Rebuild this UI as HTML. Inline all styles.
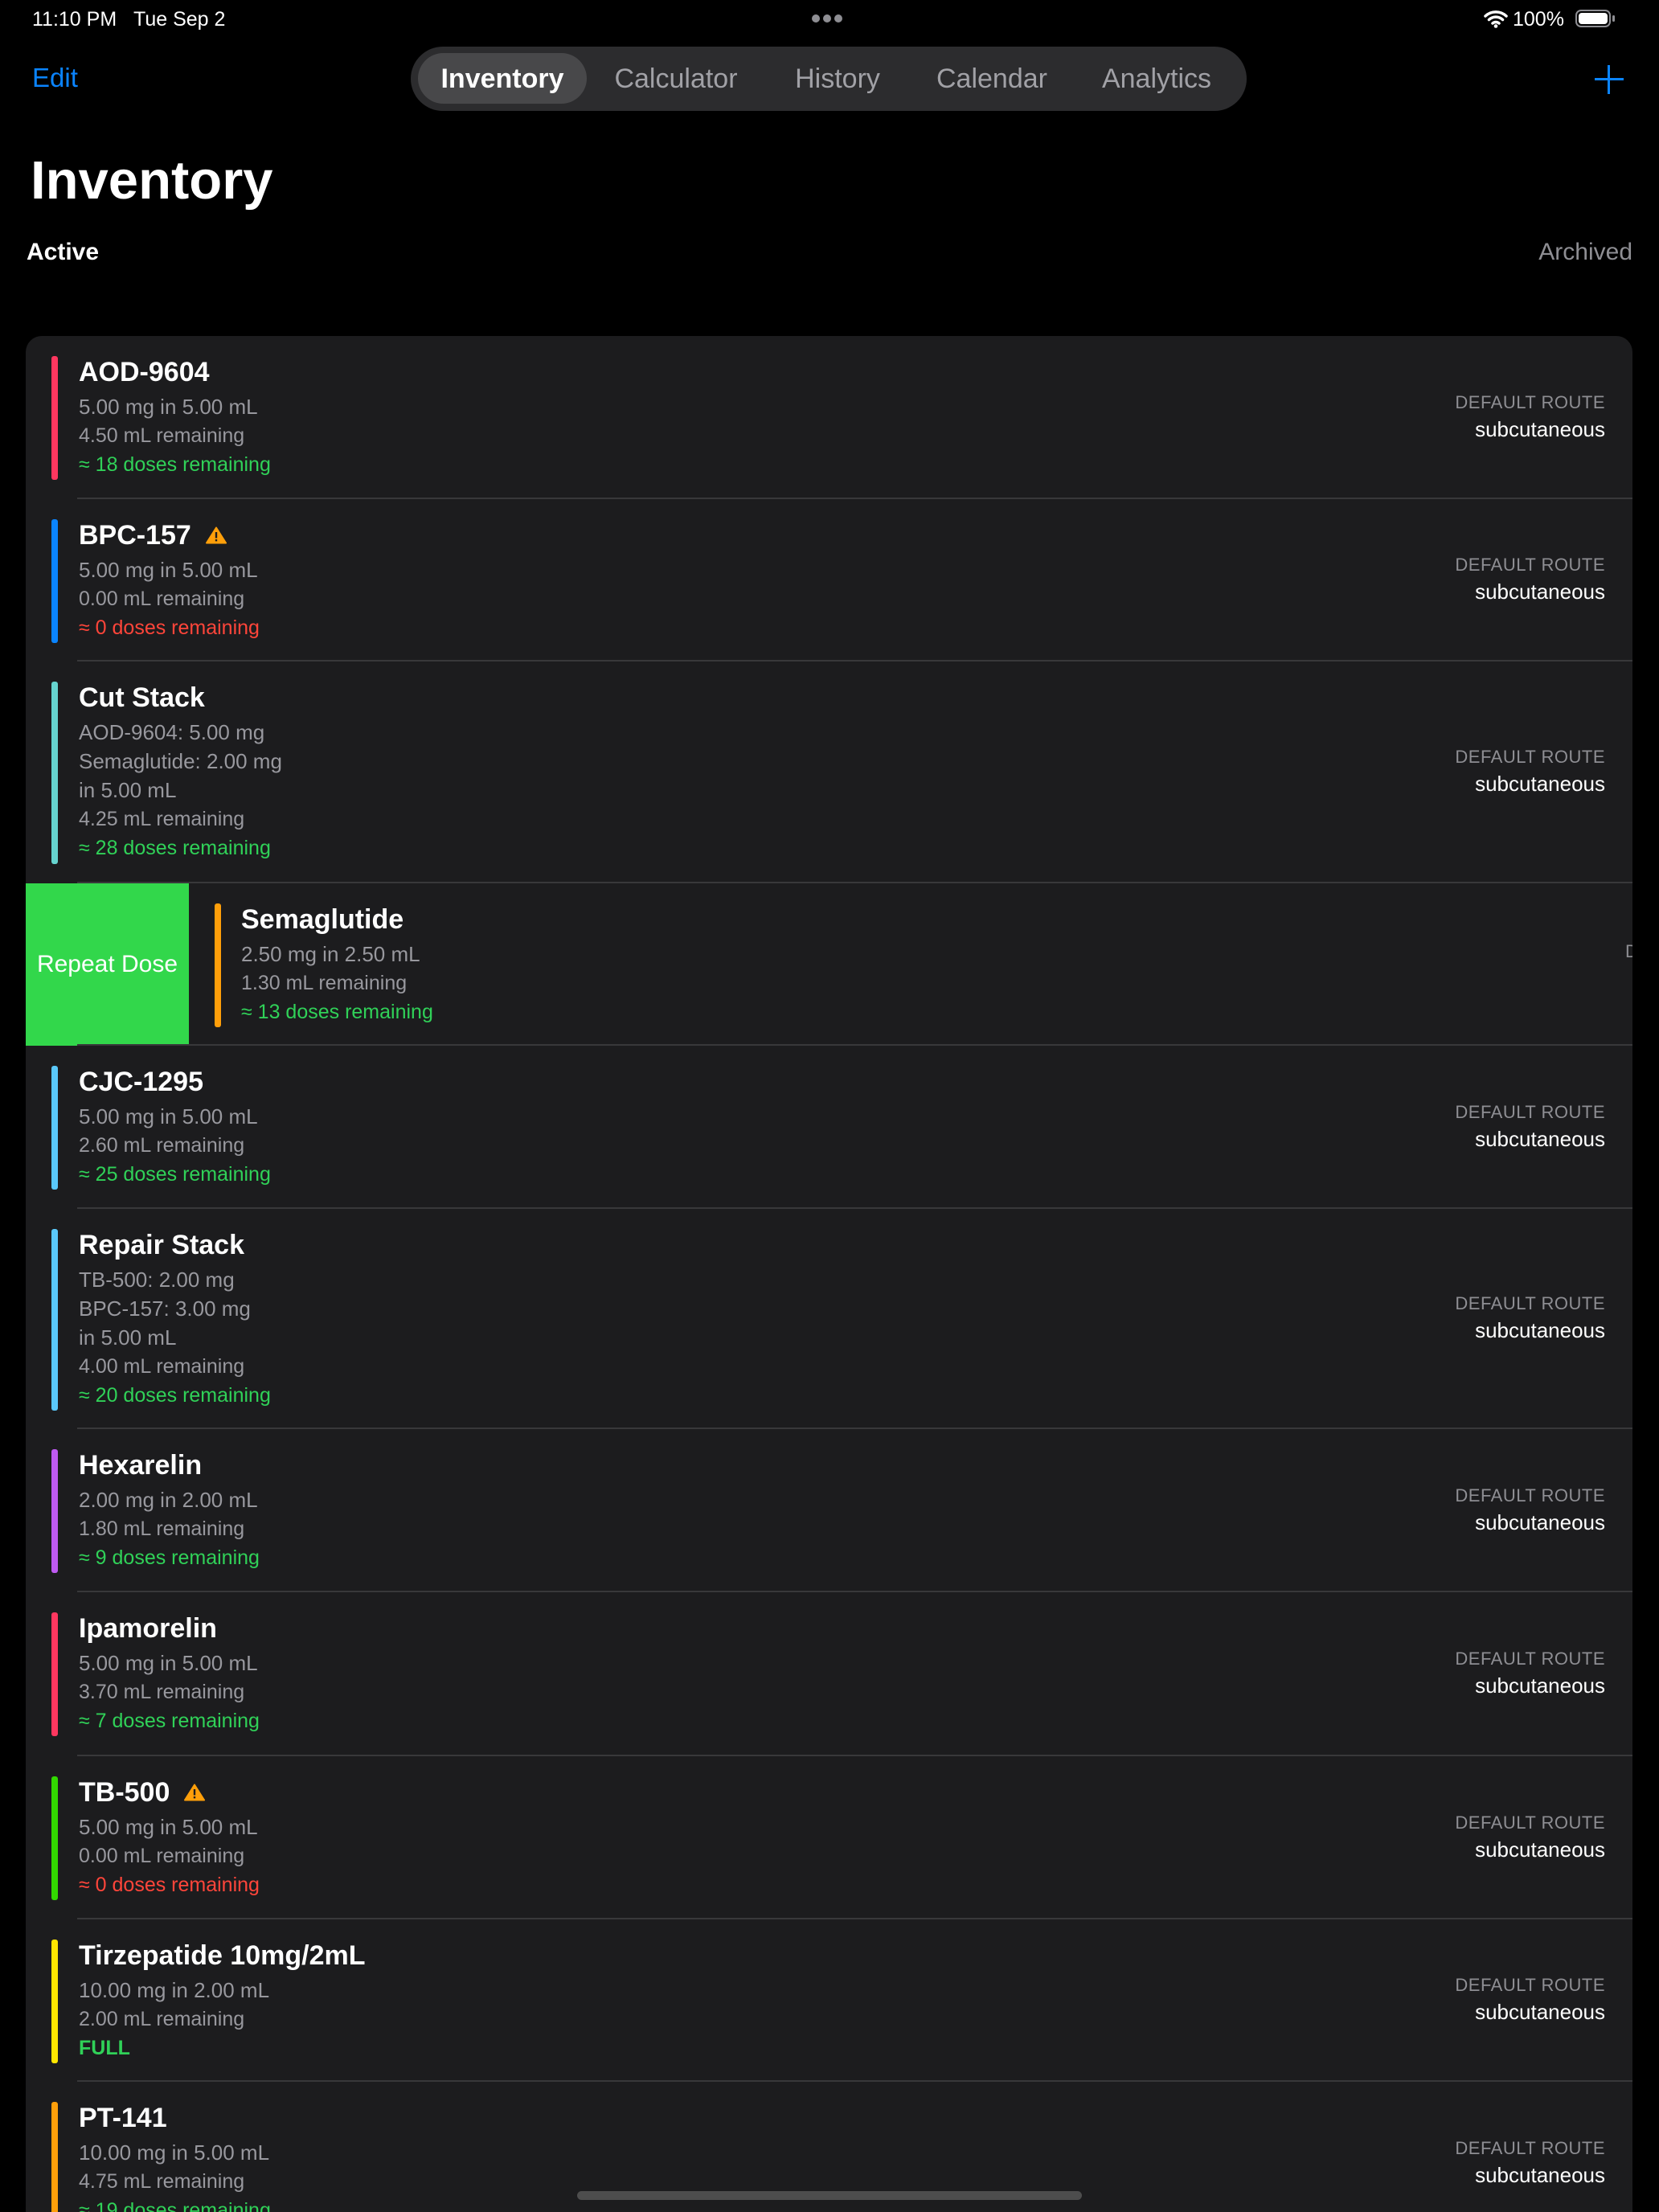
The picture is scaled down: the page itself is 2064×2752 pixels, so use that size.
<!DOCTYPE html>
<html><head><meta charset="utf-8"><style>
*{margin:0;padding:0;box-sizing:border-box}
html{width:2064px;height:2752px;overflow:hidden;background:#000}
body{width:2064px;height:2752px;background:#000;overflow:hidden;position:relative;font-family:"Liberation Sans",sans-serif;color:#fff}
.abs{position:absolute}
.card{position:absolute;left:32px;top:418px;width:1999px;height:2334px;background:#1c1c1e;border-radius:20px 20px 0 0;overflow:hidden}
.row{position:absolute;left:0;width:1999px}
.sep{position:absolute;left:64px;right:0;bottom:0;height:2px;background:#38383a}
.bar{position:absolute;left:32px;top:25px;width:8px;border-radius:3px}
.txt{position:absolute;left:66px;top:20px;white-space:nowrap}
.nm{font-size:34px;font-weight:600;height:50px;line-height:44px;display:flex;align-items:center}
.l{font-size:26px;line-height:36px;color:#98989e}
.s{font-size:25px}
.g{color:#30d158}.r{color:#ff453a}
.rt{position:absolute;right:34px;top:50%;transform:translateY(-50%);text-align:right;margin-top:-2px}
.rt .a{font-size:22px;color:#8e8e93;line-height:32px;letter-spacing:.5px}
.rt .b{font-size:26px;line-height:34px}
.warn{margin-left:18px;width:26px;height:22px}
</style></head><body>
<div class="abs" style="left:40px;top:8px;font-size:25px;line-height:32px">11:10 PM&nbsp;&nbsp;&nbsp;Tue Sep 2</div>
<div class="abs" style="left:1010px;top:18px;display:flex;gap:4px"><i style="width:10px;height:10px;border-radius:5px;background:#8e8e93"></i><i style="width:10px;height:10px;border-radius:5px;background:#8e8e93"></i><i style="width:10px;height:10px;border-radius:5px;background:#8e8e93"></i></div>
<svg class="abs" style="left:1846px;top:11px" width="30" height="24" viewBox="0 0 30 24"><path d="M2 9a19 19 0 0 1 26 0M6.5 13.5a12.5 12.5 0 0 1 17 0M11 18a6 6 0 0 1 8 0" stroke="#fff" stroke-width="3.5" fill="none" stroke-linecap="round"/><circle cx="15" cy="21.5" r="2.3" fill="#fff"/></svg>
<div class="abs" style="left:1882px;top:8px;font-size:25px;line-height:32px">100%</div>
<div class="abs" style="left:1960px;top:12px;width:44px;height:22px;border:2px solid #8e8e93;border-radius:7px;padding:2px"><div style="width:100%;height:100%;background:#fff;border-radius:4px"></div></div>
<div class="abs" style="left:2006px;top:19px;width:3px;height:8px;background:#8e8e93;border-radius:2px"></div>

<div class="abs" style="left:40px;top:76px;font-size:33px;color:#0a84ff;line-height:42px">Edit</div>
<div class="abs" style="left:511px;top:58px;width:1040px;height:80px;background:#2c2c2e;border-radius:40px"></div>
<div class="abs" style="left:520px;top:66px;width:210px;height:63px;background:#48484a;border-radius:32px"></div>
<div class="abs" style="top:77px;left:0;width:2064px;font-size:34px;line-height:42px;color:#a1a1a6">
<span class="abs" style="left:625px;transform:translateX(-50%);color:#fff;font-weight:600">Inventory</span>
<span class="abs" style="left:841px;transform:translateX(-50%)">Calculator</span>
<span class="abs" style="left:1042px;transform:translateX(-50%)">History</span>
<span class="abs" style="left:1234px;transform:translateX(-50%)">Calendar</span>
<span class="abs" style="left:1439px;transform:translateX(-50%)">Analytics</span>
</div>
<div class="abs" style="left:1984px;top:97px;width:36px;height:3px;background:#0a84ff"></div>
<div class="abs" style="left:2000px;top:81px;width:3px;height:36px;background:#0a84ff"></div>

<div class="abs" style="left:38px;top:184px;font-size:67px;font-weight:bold;line-height:82px">Inventory</div>
<div class="abs" style="left:33px;top:296px;font-size:30px;font-weight:600;line-height:36px">Active</div>
<div class="abs" style="right:33px;top:296px;font-size:30px;color:#8e8e93;line-height:36px">Archived</div>

<div class="card">
<div class="row" style="top:0;height:203px"><div class="bar" style="height:154px;background:#ff375f"></div><div class="txt"><div class="nm">AOD-9604</div><div class="l">5.00 mg in 5.00 mL</div><div class="l s">4.50 mL remaining</div><div class="l s g">≈ 18 doses remaining</div></div><div class="rt"><div class="a">DEFAULT ROUTE</div><div class="b">subcutaneous</div></div><div class="sep"></div></div>
<div class="row" style="top:203px;height:202px"><div class="bar" style="height:154px;background:#0a84ff"></div><div class="txt"><div class="nm">BPC-157<svg class="warn" viewBox="0 0 26 22"><path d="M13 1.5 L25 20.5 H1 Z" fill="#ff9f0a" stroke="#ff9f0a" stroke-width="2" stroke-linejoin="round"/><rect x="11.8" y="7" width="2.4" height="7.5" fill="#1c1c1e"/><rect x="11.8" y="16" width="2.4" height="2.4" fill="#1c1c1e"/></svg></div><div class="l">5.00 mg in 5.00 mL</div><div class="l s">0.00 mL remaining</div><div class="l s r">≈ 0 doses remaining</div></div><div class="rt"><div class="a">DEFAULT ROUTE</div><div class="b">subcutaneous</div></div><div class="sep"></div></div>
<div class="row" style="top:405px;height:276px"><div class="bar" style="height:227px;background:#66d4cf"></div><div class="txt"><div class="nm">Cut Stack</div><div class="l">AOD-9604: 5.00 mg</div><div class="l">Semaglutide: 2.00 mg</div><div class="l">in 5.00 mL</div><div class="l s">4.25 mL remaining</div><div class="l s g">≈ 28 doses remaining</div></div><div class="rt"><div class="a">DEFAULT ROUTE</div><div class="b">subcutaneous</div></div><div class="sep"></div></div>
<div class="row" style="top:681px;height:202px"><div style="position:absolute;left:0;top:0;width:203px;height:202px;background:#32d74b;display:flex;align-items:center;justify-content:center;font-size:30px">Repeat Dose</div><div class="bar" style="left:235px;height:154px;background:#ff9f0a"></div><div class="txt" style="left:268px"><div class="nm">Semaglutide</div><div class="l">2.50 mg in 2.50 mL</div><div class="l s">1.30 mL remaining</div><div class="l s g">≈ 13 doses remaining</div></div><div class="abs" style="left:1990px;top:72px;font-size:22px;color:#8e8e93">D</div><div class="sep"></div></div>
<div class="row" style="top:883px;height:203px"><div class="bar" style="height:154px;background:#5ac8fa"></div><div class="txt"><div class="nm">CJC-1295</div><div class="l">5.00 mg in 5.00 mL</div><div class="l s">2.60 mL remaining</div><div class="l s g">≈ 25 doses remaining</div></div><div class="rt"><div class="a">DEFAULT ROUTE</div><div class="b">subcutaneous</div></div><div class="sep"></div></div>
<div class="row" style="top:1086px;height:274px"><div class="bar" style="height:226px;background:#5ac8fa"></div><div class="txt"><div class="nm">Repair Stack</div><div class="l">TB-500: 2.00 mg</div><div class="l">BPC-157: 3.00 mg</div><div class="l">in 5.00 mL</div><div class="l s">4.00 mL remaining</div><div class="l s g">≈ 20 doses remaining</div></div><div class="rt"><div class="a">DEFAULT ROUTE</div><div class="b">subcutaneous</div></div><div class="sep"></div></div>
<div class="row" style="top:1360px;height:203px"><div class="bar" style="height:154px;background:#bf5af2"></div><div class="txt"><div class="nm">Hexarelin</div><div class="l">2.00 mg in 2.00 mL</div><div class="l s">1.80 mL remaining</div><div class="l s g">≈ 9 doses remaining</div></div><div class="rt"><div class="a">DEFAULT ROUTE</div><div class="b">subcutaneous</div></div><div class="sep"></div></div>
<div class="row" style="top:1563px;height:204px"><div class="bar" style="height:154px;background:#ff375f"></div><div class="txt"><div class="nm">Ipamorelin</div><div class="l">5.00 mg in 5.00 mL</div><div class="l s">3.70 mL remaining</div><div class="l s g">≈ 7 doses remaining</div></div><div class="rt"><div class="a">DEFAULT ROUTE</div><div class="b">subcutaneous</div></div><div class="sep"></div></div>
<div class="row" style="top:1767px;height:203px"><div class="bar" style="height:154px;background:#32d900"></div><div class="txt"><div class="nm">TB-500<svg class="warn" viewBox="0 0 26 22"><path d="M13 1.5 L25 20.5 H1 Z" fill="#ff9f0a" stroke="#ff9f0a" stroke-width="2" stroke-linejoin="round"/><rect x="11.8" y="7" width="2.4" height="7.5" fill="#1c1c1e"/><rect x="11.8" y="16" width="2.4" height="2.4" fill="#1c1c1e"/></svg></div><div class="l">5.00 mg in 5.00 mL</div><div class="l s">0.00 mL remaining</div><div class="l s r">≈ 0 doses remaining</div></div><div class="rt"><div class="a">DEFAULT ROUTE</div><div class="b">subcutaneous</div></div><div class="sep"></div></div>
<div class="row" style="top:1970px;height:202px"><div class="bar" style="height:154px;background:#ffe600"></div><div class="txt"><div class="nm">Tirzepatide 10mg/2mL</div><div class="l">10.00 mg in 2.00 mL</div><div class="l s">2.00 mL remaining</div><div class="l s g" style="font-weight:bold">FULL</div></div><div class="rt"><div class="a">DEFAULT ROUTE</div><div class="b">subcutaneous</div></div><div class="sep"></div></div>
<div class="row" style="top:2172px;height:203px"><div class="bar" style="height:154px;background:#ff9f0a"></div><div class="txt"><div class="nm">PT-141</div><div class="l">10.00 mg in 5.00 mL</div><div class="l s">4.75 mL remaining</div><div class="l s g">≈ 19 doses remaining</div></div><div class="rt"><div class="a">DEFAULT ROUTE</div><div class="b">subcutaneous</div></div></div>
</div>
<div class="abs" style="left:718px;top:2726px;width:628px;height:11px;border-radius:6px;background:#4d4d4d"></div>
</body></html>
